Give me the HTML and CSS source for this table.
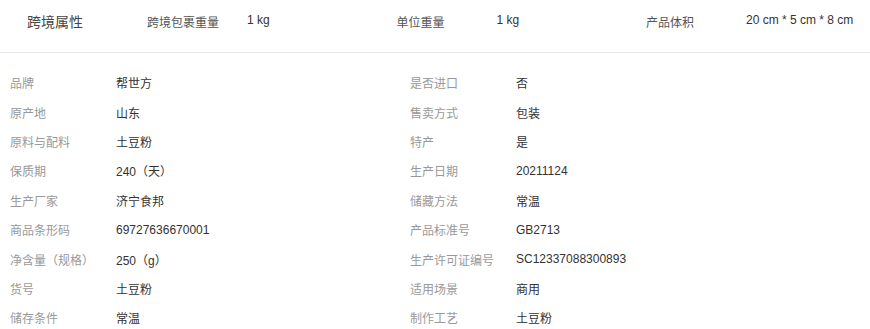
FILE: index.html
```html
<!DOCTYPE html>
<html lang="zh-CN">
<head>
<meta charset="utf-8">
<link rel="stylesheet" href="styles.css">
</head>
<body>
<div class="header">
  <div class="title">跨境属性</div>
  <div class="pairs">
    <div class="pair"><span class="hlabel">跨境包裹重量</span><span class="hvalue">1 kg</span></div>
    <div class="pair"><span class="hlabel">单位重量</span><span class="hvalue">1 kg</span></div>
    <div class="pair"><span class="hlabel">产品体积</span><span class="hvalue">20 cm * 5 cm * 8 cm</span></div>
  </div>
</div>
<div class="attrs">
  <div class="item"><span class="label">品牌</span><span class="value">帮世方</span></div>
  <div class="item"><span class="label">是否进口</span><span class="value">否</span></div>
  <div class="item"><span class="label">原产地</span><span class="value">山东</span></div>
  <div class="item"><span class="label">售卖方式</span><span class="value">包装</span></div>
  <div class="item"><span class="label">原料与配料</span><span class="value">土豆粉</span></div>
  <div class="item"><span class="label">特产</span><span class="value">是</span></div>
  <div class="item"><span class="label">保质期</span><span class="value">240（天）</span></div>
  <div class="item"><span class="label">生产日期</span><span class="value">20211124</span></div>
  <div class="item"><span class="label">生产厂家</span><span class="value">济宁食邦</span></div>
  <div class="item"><span class="label">储藏方法</span><span class="value">常温</span></div>
  <div class="item"><span class="label">商品条形码</span><span class="value">69727636670001</span></div>
  <div class="item"><span class="label">产品标准号</span><span class="value">GB2713</span></div>
  <div class="item"><span class="label">净含量（规格）</span><span class="value">250（g）</span></div>
  <div class="item"><span class="label">生产许可证编号</span><span class="value">SC12337088300893</span></div>
  <div class="item"><span class="label">货号</span><span class="value">土豆粉</span></div>
  <div class="item"><span class="label">适用场景</span><span class="value">商用</span></div>
  <div class="item"><span class="label">储存条件</span><span class="value">常温</span></div>
  <div class="item"><span class="label">制作工艺</span><span class="value">土豆粉</span></div>
</div>
</body>
</html>
```
FILE: styles.css
```css
html, body {
  margin: 0;
  padding: 0;
  background: #fff;
}
body {
  font-family: "Liberation Sans", "Noto Sans CJK SC", sans-serif;
  font-size: 12px;
  color: #333;
}
.header {
  display: flex;
  align-items: center;
  height: 42px;
  padding-bottom: 10px;
  border-bottom: 1px solid #e8e8e8;
  overflow: hidden;
}
.title {
  flex: none;
  width: 147px;
  box-sizing: border-box;
  padding-left: 27px;
  font-size: 14px;
  color: #444;
}
.pairs {
  display: flex;
  flex: none;
}
.pair {
  display: flex;
  flex: none;
  width: 249.5px;
}
.hlabel {
  flex: none;
  width: 100px;
  color: #555;
}
.hvalue {
  color: #333;
  white-space: nowrap;
}
.attrs {
  display: grid;
  grid-template-columns: 400px 1fr;
  grid-auto-rows: 29.4px;
  padding: 15px 0 0 10px;
}
.item {
  display: flex;
  align-items: center;
}
.label {
  width: 106px;
  color: #999;
}
.value {
  color: #333;
}
```
